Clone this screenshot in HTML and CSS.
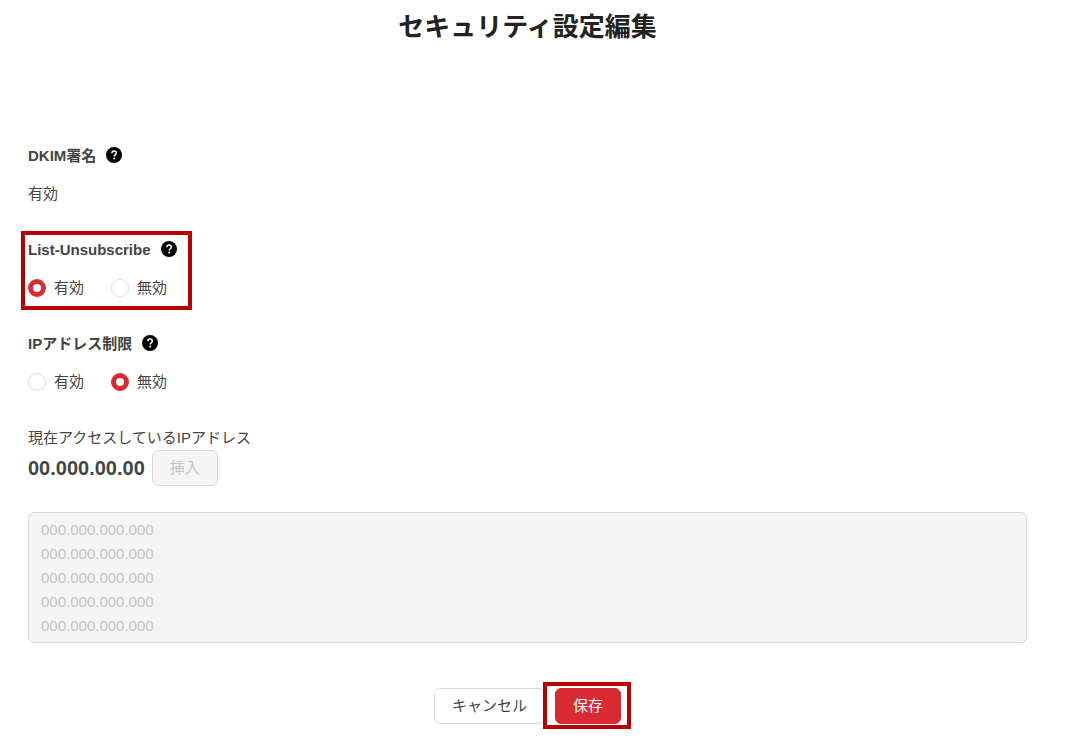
FILE: index.html
```html
<!DOCTYPE html>
<html lang="ja">
<head>
<meta charset="utf-8">
<meta name="viewport" content="width=device-width, initial-scale=1">
<title>セキュリティ設定編集</title>
<link rel="stylesheet" href="styles.css">
</head>
<body>
<svg class="sprite" aria-hidden="true">
  <symbol id="help" viewBox="0 0 16 16">
    <circle cx="8" cy="8" r="8" fill="#000"/>
    <path d="M5.9 6.3C5.9 4.9 6.8 4.1 8.1 4.1s2.2.8 2.2 2c0 1.7-2.1 1.7-2.1 3.3" fill="none" stroke="#fff" stroke-width="1.5"/>
    <circle cx="8.2" cy="11.5" r="1" fill="#fff"/>
  </symbol>
</svg>
<main class="page">
  <h1 class="title">セキュリティ設定編集</h1>
  <form class="form">
    <section class="field">
      <h2 class="label">DKIM署名 <button type="button" class="help" aria-label="DKIM署名のヘルプ"><svg class="help-icon"><use href="#help"/></svg></button></h2>
      <p class="value">有効</p>
    </section>
    <fieldset class="field highlight">
      <legend class="label">List-Unsubscribe <button type="button" class="help" aria-label="List-Unsubscribeのヘルプ"><svg class="help-icon"><use href="#help"/></svg></button></legend>
      <div class="options">
        <label class="option"><input class="radio" type="radio" name="unsubscribe" checked>有効</label>
        <label class="option"><input class="radio" type="radio" name="unsubscribe">無効</label>
      </div>
    </fieldset>
    <fieldset class="field">
      <legend class="label">IPアドレス制限 <button type="button" class="help" aria-label="IPアドレス制限のヘルプ"><svg class="help-icon"><use href="#help"/></svg></button></legend>
      <div class="options">
        <label class="option"><input class="radio" type="radio" name="restriction">有効</label>
        <label class="option"><input class="radio" type="radio" name="restriction" checked>無効</label>
      </div>
    </fieldset>
    <section class="current">
      <p class="caption">現在アクセスしているIPアドレス</p>
      <div class="address-row">
        <strong class="address">00.000.00.00</strong>
        <button type="button" class="button" disabled>挿入</button>
      </div>
    </section>
    <textarea class="addresses" rows="5" aria-label="許可するIPアドレス" disabled placeholder="000.000.000.000&#10;000.000.000.000&#10;000.000.000.000&#10;000.000.000.000&#10;000.000.000.000"></textarea>
    <div class="actions">
      <button type="button" class="button">キャンセル</button>
      <div class="save"><button type="submit" class="button primary">保存</button></div>
    </div>
  </form>
</main>
</body>
</html>
```

FILE: styles.css
```css
* {
  box-sizing: border-box;
}

body {
  margin: 0;
  background: #fff;
  color: #444;
  font: 15px/24px "Liberation Sans", "Noto Sans CJK JP", sans-serif;
}

.sprite {
  position: absolute;
  width: 0;
  height: 0;
}

.page {
  padding: 9px 41px 0 28px;
}

.title {
  margin: 0 0 99px;
  color: #222;
  font-size: 26px;
  line-height: 36px;
  text-align: center;
}

.form {
  display: flex;
  flex-direction: column;
}

.field {
  min-width: 0;
  margin: 0 0 32px;
  padding: 0;
  border: 0;
}

.label {
  display: flex;
  align-items: center;
  gap: 10px;
  margin: 0 0 14px;
  padding: 0;
  font-size: 15px;
  font-weight: 700;
  line-height: 24px;
}

.help {
  display: flex;
  padding: 0 0 2px;
  border: 0;
  background: none;
}

.help-icon {
  width: 16px;
  height: 16px;
}

.value,
.caption {
  margin: 0;
}

.options {
  display: flex;
  gap: 27px;
}

.option {
  display: flex;
  align-items: center;
  gap: 8px;
}

.radio {
  appearance: none;
  width: 18px;
  height: 18px;
  margin: 0;
  border: 1px solid #d9d9d9;
  border-radius: 50%;
  background: #fff;
}

.radio:checked {
  border: 5px solid #d92b34;
}

.highlight {
  align-self: flex-start;
  width: 171px;
  margin: -7px 0 22px -7px;
  outline: 4px solid #b40206;
  outline-offset: -4px;
  padding: 0 7px 10px;
}

.highlight .label {
  padding-top: 7px;
}

.address-row {
  display: flex;
  align-items: center;
  gap: 7px;
}

.address {
  font-size: 20px;
}

.button {
  height: 36px;
  padding: 0 17px;
  border: 1px solid #d9d9d9;
  border-radius: 6px;
  background: #fff;
  color: #444;
  font: inherit;
}

.button:disabled {
  background: #f5f5f5;
  color: #c4c4c4;
}

.addresses {
  display: block;
  width: 100%;
  height: 131px;
  margin: 26px 0 39px;
  padding: 5px 12px;
  overflow: hidden;
  resize: none;
  border: 1px solid #d9d9d9;
  border-radius: 6px;
  background: #f5f5f5;
  font: inherit;
}

.addresses::placeholder {
  color: #c4c4c4;
}

.actions {
  display: flex;
  align-items: center;
  justify-content: center;
}

.save {
  display: flex;
  margin: 0 -10px 0 -2px;
  padding: 2px 6px 1px 8px;
  border: 4px solid #b40206;
  background: #fff;
}

.primary {
  border-color: #d92b34;
  background: #d92b34;
  color: #fff;
}
```
